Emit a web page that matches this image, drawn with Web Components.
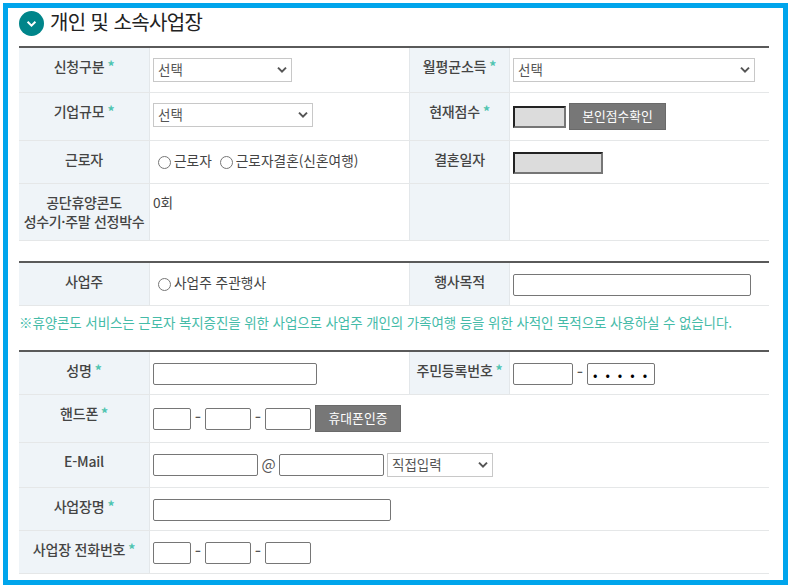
<!DOCTYPE html>
<html lang="ko">
<head>
<meta charset="utf-8">
<title>개인 및 소속사업장</title>
<style>
html, body { margin: 0; background: #fff; }
body { font-family: "Noto Sans CJK KR", "Noto Sans", sans-serif; font-size: 13.5px; color: #444; }
</style>
</head>
<body>
<app-frame>
  <section-title>개인 및 소속사업장</section-title>

  <form-table>
    <form-row h="45">
      <form-label required>신청구분</form-label>
      <form-cell><select-field w="139">선택</select-field></form-cell>
      <form-label mid required>월평균소득</form-label>
      <form-cell><select-field w="242">선택</select-field></form-cell>
    </form-row>
    <form-row h="48">
      <form-label required>기업규모</form-label>
      <form-cell><select-field w="160">선택</select-field></form-cell>
      <form-label mid required>현재점수</form-label>
      <form-cell><text-field w="53" locked></text-field><sep-text w="3"></sep-text><action-button w="97">본인점수확인</action-button></form-cell>
    </form-row>
    <form-row h="43">
      <form-label>근로자</form-label>
      <form-cell><radio-option style="margin-left:5px">근로자</radio-option><radio-option style="margin-left:8px">근로자결혼(신혼여행)</radio-option></form-cell>
      <form-label mid>결혼일자</form-label>
      <form-cell><text-field w="90" locked></text-field></form-cell>
    </form-row>
    <form-row h="57">
      <form-label tight>공단휴양콘도<br>성수기·주말 선정박수</form-label>
      <form-cell style="padding-top:6px">0회</form-cell>
      <form-label mid></form-label>
      <form-cell></form-cell>
    </form-row>
  </form-table>

  <form-table style="margin-top:20px">
    <form-row h="43">
      <form-label>사업주</form-label>
      <form-cell><radio-option style="margin-left:5px">사업주 주관행사</radio-option></form-cell>
      <form-label mid>행사목적</form-label>
      <form-cell><text-field w="238"></text-field></form-cell>
    </form-row>
  </form-table>

  <notice-line>※휴양콘도 서비스는 근로자 복지증진을 위한 사업으로 사업주 개인의 가족여행 등을 위한 사적인 목적으로 사용하실 수 없습니다.</notice-line>

  <form-table>
    <form-row h="43">
      <form-label required>성명</form-label>
      <form-cell><text-field w="164"></text-field></form-cell>
      <form-label mid required>주민등록번호</form-label>
      <form-cell><text-field w="60"></text-field><sep-text w="14" dash>-</sep-text><text-field w="68" secret></text-field></form-cell>
    </form-row>
    <form-row h="48">
      <form-label required>핸드폰</form-label>
      <form-cell wide><text-field w="38"></text-field><sep-text w="14" dash>-</sep-text><text-field w="46"></text-field><sep-text w="14" dash>-</sep-text><text-field w="46"></text-field><sep-text w="4"></sep-text><action-button w="86">휴대폰인증</action-button></form-cell>
    </form-row>
    <form-row h="45">
      <form-label>E-Mail</form-label>
      <form-cell wide><text-field w="105"></text-field><sep-text w="21" at>@</sep-text><text-field w="105"></text-field><sep-text w="3"></sep-text><select-field w="106">직접입력</select-field></form-cell>
    </form-row>
    <form-row h="43">
      <form-label required>사업장명</form-label>
      <form-cell wide><text-field w="238"></text-field></form-cell>
    </form-row>
    <form-row h="43">
      <form-label required>사업장 전화번호</form-label>
      <form-cell wide><text-field w="38"></text-field><sep-text w="14" dash>-</sep-text><text-field w="46"></text-field><sep-text w="14" dash>-</sep-text><text-field w="46"></text-field></form-cell>
    </form-row>
  </form-table>
</app-frame>

<script>
class AppFrame extends HTMLElement {
    connectedCallback() {
        const shadow = this.attachShadow({ mode: 'open' });
        shadow.innerHTML = `
        <style>
        :host {
            display: block;
            box-sizing: border-box;
            width: 785px;
            height: 582px;
            margin: 3px 0 0 3px;
            border: 5px solid #00a5ec;
            padding: 0 14px 0 11px;
            overflow: hidden;
        }
        </style>
        <slot></slot>`;
    }
}

class SectionTitle extends HTMLElement {
    connectedCallback() {
        const shadow = this.attachShadow({ mode: 'open' });
        shadow.innerHTML = `
        <style>
        :host {
            display: flex;
            align-items: center;
            gap: 6px;
            height: 25px;
            margin: 3px 0 10px;
            font-size: 20px;
            color: #222;
            letter-spacing: -0.6px;
        }
        span { display: block; margin-top: -4px; }
        svg { display: block; flex: none; }
        </style>
        <svg width="25" height="25" viewBox="0 0 25 25">
            <circle cx="12.5" cy="12.5" r="12.5" fill="#00858a"/>
            <path d="M8.6 10.8 12.5 14.6 16.4 10.8" fill="none" stroke="#fff" stroke-width="2"/>
        </svg>
        <span><slot></slot></span>`;
    }
}

class FormTable extends HTMLElement {
    connectedCallback() {
        const shadow = this.attachShadow({ mode: 'open' });
        shadow.innerHTML = `
        <style>
        :host { display: block; border-top: 2px solid #5a5a5a; }
        </style>
        <slot></slot>`;
    }
}

class FormRow extends HTMLElement {
    connectedCallback() {
        const shadow = this.attachShadow({ mode: 'open' });
        shadow.innerHTML = `
        <style>
        :host {
            display: grid;
            grid-template-columns: 131px 259px 101px 1fr;
            box-sizing: border-box;
            border-bottom: 1px solid #e5e7e8;
        }
        </style>
        <slot></slot>`;
        this.style.height = this.getAttribute('h') + 'px';
    }
}

class FormLabel extends HTMLElement {
    connectedCallback() {
        const shadow = this.attachShadow({ mode: 'open' });
        let star = this.hasAttribute('required') ? '<span class="star">*</span>' : '';
        shadow.innerHTML = `
        <style>
        :host {
            display: block;
            box-sizing: border-box;
            padding-top: 9px;
            background: #eff4f8;
            border-right: 1px solid #e3e7ea;
            text-align: center;
            font-weight: 500;
            font-size: 14px;
            line-height: 18px;
            color: #444;
            letter-spacing: -0.2px;
            white-space: nowrap;
        }
        :host([mid]) { border-left: 1px solid #e3e7ea; }
        :host([tight]) { padding-top: 9px; line-height: 19px; letter-spacing: -0.3px; }
        .star { color: #4fc4b0; margin-left: 3px; font-weight: 700; }
        </style>
        <slot></slot>${star}`;
    }
}

class FormCell extends HTMLElement {
    connectedCallback() {
        const shadow = this.attachShadow({ mode: 'open' });
        shadow.innerHTML = `
        <style>
        :host {
            display: flex;
            align-items: center;
            align-self: start;
            padding: 10px 0 0 3px;
            min-height: 24px;
            font-size: 13.7px;
            line-height: 18px;
            color: #444;
        }
        :host([wide]) { grid-column: 2 / -1; }
        </style>
        <slot></slot>`;
    }
}

class TextField extends HTMLElement {
    connectedCallback() {
        const shadow = this.attachShadow({ mode: 'open' });
        let w = this.getAttribute('w');
        let secret = this.hasAttribute('secret');
        shadow.innerHTML = `
        <style>
        :host { display: block; flex: none; width: ${w}px; height: 22px; }
        input {
            display: block;
            box-sizing: border-box;
            width: 100%;
            height: 100%;
            margin: 0;
            padding: 0 0 0 5px;
            border: 1px solid #767676;
            border-radius: 2px;
            background: #fff;
            outline: none;
            font-family: inherit;
            font-size: 13px;
            letter-spacing: 8px;
        }
        :host([locked]) input {
            border: 2px solid #767676;
            border-top-color: #222;
            border-left-color: #222;
            border-radius: 0;
            background: #dcdcdc;
        }
        </style>
        <input type="${secret ? 'password' : 'text'}" value="${secret ? '12345' : ''}">`;
    }
}

class SelectField extends HTMLElement {
    connectedCallback() {
        const shadow = this.attachShadow({ mode: 'open' });
        let w = this.getAttribute('w');
        shadow.innerHTML = `
        <style>
        :host { display: block; position: relative; flex: none; width: ${w}px; height: 24px; }
        .box {
            box-sizing: border-box;
            height: 100%;
            padding-left: 4px;
            border: 1px solid #c8c8c8;
            background: #fff;
            font-size: 13.5px;
            line-height: 20px;
            color: #555;
        }
        svg { position: absolute; right: 5px; top: 8px; }
        </style>
        <div class="box"><slot></slot></div>
        <svg width="10" height="8" viewBox="0 0 10 8"><path d="M1 1.6 5 5.6 9 1.6" fill="none" stroke="#555" stroke-width="2"/></svg>`;
    }
}

class RadioOption extends HTMLElement {
    connectedCallback() {
        const shadow = this.attachShadow({ mode: 'open' });
        shadow.innerHTML = `
        <style>
        :host {
            display: inline-flex;
            align-items: center;
            align-self: flex-start;
            height: 24px;
            margin-top: -3px;
            font-size: 13.7px;
            color: #444;
            white-space: nowrap;
        }
        input { width: 13px; height: 13px; margin: 4px 3px 0 0; }
        </style>
        <input type="radio"><slot></slot>`;
    }
}

class ActionButton extends HTMLElement {
    connectedCallback() {
        const shadow = this.attachShadow({ mode: 'open' });
        let w = this.getAttribute('w');
        shadow.innerHTML = `
        <style>
        :host {
            display: block;
            flex: none;
            box-sizing: border-box;
            width: ${w}px;
            height: 27px;
            background: #777;
            border: 1px solid #6a6a6a;
            color: #fff;
            font-size: 12.8px;
            line-height: 23px;
            text-align: center;
        }
        </style>
        <slot></slot>`;
    }
}

class SepText extends HTMLElement {
    connectedCallback() {
        const shadow = this.attachShadow({ mode: 'open' });
        shadow.innerHTML = `
        <style>
        :host { display: block; flex: none; width: ${this.getAttribute('w')}px; text-align: center; font-size: 13.5px; color: #555; }
        :host([dash]) { font-size: 18px; margin-top: -6px; }
        :host([at]) { font-size: 15px; margin-top: -2px; }
        </style>
        <slot></slot>`;
    }
}

class NoticeLine extends HTMLElement {
    connectedCallback() {
        const shadow = this.attachShadow({ mode: 'open' });
        shadow.innerHTML = `
        <style>
        :host {
            display: block;
            height: 44px;
            box-sizing: border-box;
            padding-top: 7px;
            font-size: 13.5px;
            line-height: 18px;
            color: #45bba8;
            white-space: nowrap;
            letter-spacing: -0.1px;
        }
        </style>
        <slot></slot>`;
    }
}

customElements.define('app-frame', AppFrame);
customElements.define('section-title', SectionTitle);
customElements.define('form-table', FormTable);
customElements.define('form-row', FormRow);
customElements.define('form-label', FormLabel);
customElements.define('form-cell', FormCell);
customElements.define('text-field', TextField);
customElements.define('select-field', SelectField);
customElements.define('radio-option', RadioOption);
customElements.define('action-button', ActionButton);
customElements.define('sep-text', SepText);
customElements.define('notice-line', NoticeLine);
</script>
</body>
</html>
